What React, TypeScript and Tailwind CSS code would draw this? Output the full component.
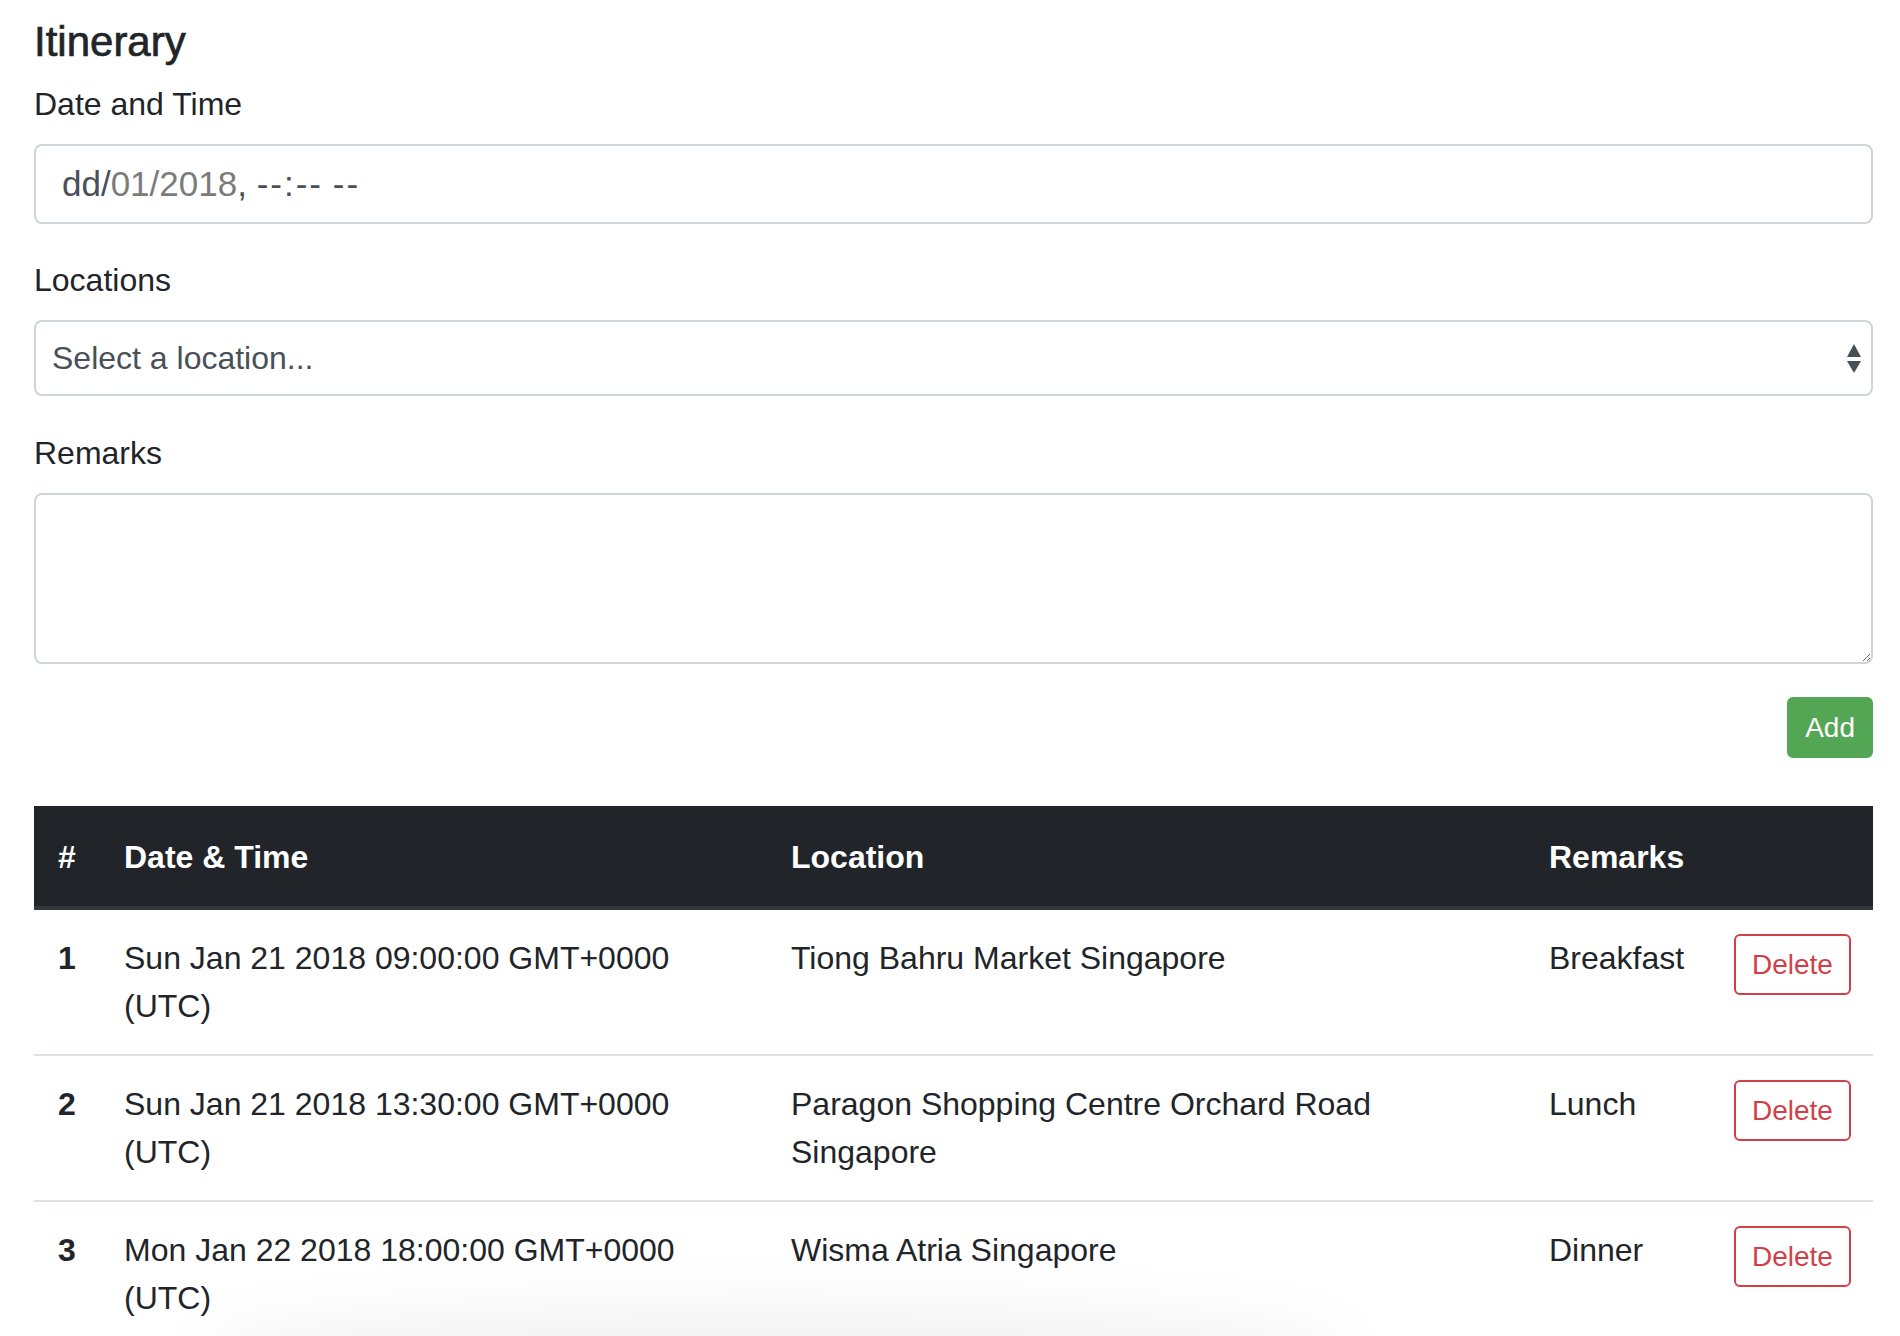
import React from "react";

const rows = [
  {
    n: "1",
    date: "Sun Jan 21 2018 09:00:00 GMT+0000 (UTC)",
    loc: "Tiong Bahru Market Singapore",
    rem: "Breakfast",
  },
  {
    n: "2",
    date: "Sun Jan 21 2018 13:30:00 GMT+0000 (UTC)",
    loc: "Paragon Shopping Centre Orchard Road Singapore",
    rem: "Lunch",
  },
  {
    n: "3",
    date: "Mon Jan 22 2018 18:00:00 GMT+0000 (UTC)",
    loc: "Wisma Atria Singapore",
    rem: "Dinner",
  },
];

export default function App() {
  return (
    <div className="relative h-[1336px] overflow-hidden bg-white pl-[34px] pr-[27px] pt-[17px] font-['Liberation_Sans',Arial,sans-serif] text-[#212529]">
      <h4 className="mb-[13px] text-[42px] leading-[50px] [-webkit-text-stroke:0.7px_#212529]">
        Itinerary
      </h4>

      <div className="mb-[32px]">
        <label className="mb-[16px] block text-[32px] leading-[48px]">Date and Time</label>
        <div className="flex h-[80px] items-center rounded-[8px] border-2 border-[#ced4da] pl-[26px] text-[35px] leading-[48px] text-[#495057]">
          <span>dd/</span>
          <span className="text-[#7b7b7b]">01/2018</span>
          <span className="whitespace-pre">, </span>
          <span className="tracking-[2px]">--:--</span>
          <span className="whitespace-pre"> </span>
          <span className="tracking-[2px]">--</span>
        </div>
      </div>

      <div className="mb-[33px]">
        <label className="mb-[16px] block text-[32px] leading-[48px]">Locations</label>
        <div className="flex h-[76px] items-center justify-between rounded-[8px] border-2 border-[#ced4da] pl-[16px] pr-[8px] text-[32px] leading-[48px] text-[#495057]">
          <span>Select a location...</span>
          <svg width="16" height="31" viewBox="0 0 16 31" className="mr-[1px]">
            <polygon points="8,1 15,14 1,14" fill="#4a4f55" />
            <polygon points="1,18 15,18 8,30" fill="#4a4f55" />
          </svg>
        </div>
      </div>

      <div className="mb-[33px]">
        <label className="mb-[16px] block text-[32px] leading-[48px]">Remarks</label>
        <textarea
          className="block h-[171px] w-full rounded-[8px] border-2 border-[#ced4da] px-[24px] py-[12px] text-[32px] leading-[48px] text-[#495057] outline-none"
          defaultValue=""
        />
      </div>

      <div className="mb-[48px] flex justify-end">
        <button className="h-[61px] rounded-[6px] border-2 border-[#53a653] bg-[#53a653] px-[16px] text-[28px] leading-[42px] text-white">
          Add
        </button>
      </div>

      <table className="w-full table-fixed border-collapse text-[32px] leading-[48px]">
        <colgroup>
          <col className="w-[66px]" />
          <col className="w-[667px]" />
          <col className="w-[758px]" />
          <col className="w-[185px]" />
          <col className="w-[163px]" />
        </colgroup>
        <thead>
          <tr className="bg-[#212529] text-white">
            <th className="border-b-4 border-[#32383e] px-[24px] pb-[25px] pt-[27px] text-left align-top font-bold">#</th>
            <th className="border-b-4 border-[#32383e] px-[24px] pb-[25px] pt-[27px] text-left align-top font-bold">Date &amp; Time</th>
            <th className="border-b-4 border-[#32383e] px-[24px] pb-[25px] pt-[27px] text-left align-top font-bold">Location</th>
            <th className="border-b-4 border-[#32383e] px-[24px] pb-[25px] pt-[27px] text-left align-top font-bold">Remarks</th>
            <th className="border-b-4 border-[#32383e] px-[24px] pb-[25px] pt-[27px] text-left align-top font-bold"></th>
          </tr>
        </thead>
        <tbody>
          {rows.map((r, i) => (
            <tr key={r.n} className={i > 0 ? "border-t-2 border-[#dee2e6]" : ""}>
              <td className="p-[24px] align-top font-bold">{r.n}</td>
              <td className="p-[24px] align-top">{r.date}</td>
              <td className="p-[24px] align-top">{r.loc}</td>
              <td className="p-[24px] align-top">{r.rem}</td>
              <td className="p-[24px] align-top">
                <button className="h-[61px] rounded-[6px] border-2 border-[#d13f47] bg-white px-[16px] text-[28px] leading-[42px] text-[#d13f47]">
                  Delete
                </button>
              </td>
            </tr>
          ))}
        </tbody>
      </table>

      <div className="pointer-events-none absolute bottom-[-70px] left-[200px] h-[100px] w-[1150px] rounded-[50%] bg-black/[0.05] blur-[30px]" />
    </div>
  );
}
